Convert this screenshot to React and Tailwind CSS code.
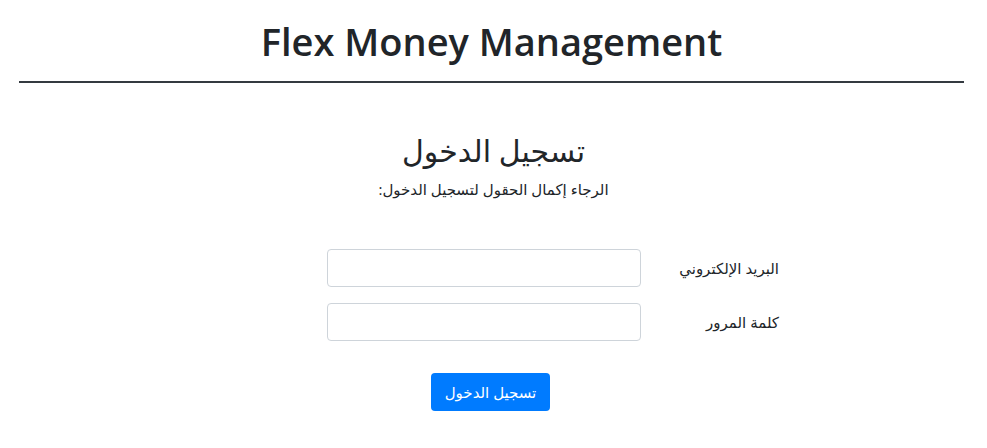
import React, { useState } from 'react';

export default function App() {
  const [form, setForm] = useState({ email: '', password: '' });

  return (
    <div className="min-h-[448px] bg-white text-[#212529]" style={{ fontFamily: '"Open Sans", "DejaVu Sans", sans-serif' }}>
      <header className="pl-[19px] pr-[23px] pt-[18px]">
        <h1 className="text-center text-[38px] leading-[46px] font-semibold pb-[17px]">Flex Money Management</h1>
        <div className="h-[2px] bg-[#343a40]" />
      </header>

      <main dir="rtl" className="pt-[48px]">
        <h2 className="text-center text-[30px] leading-[40px] font-normal">تسجيل الدخول</h2>
        <p className="text-center text-[15px] leading-[24px] mt-[6px]">الرجاء إكمال الحقول لتسجيل الدخول:</p>

        <form onSubmit={e => e.preventDefault()} className="mt-[48px]">
          <div className="w-[571px] mx-auto flex flex-col gap-[16px]">
            <div className="flex items-center">
              <label className="w-[138px] text-[15px]">البريد الإلكتروني</label>
              <input type="email" value={form.email} onChange={e => setForm({ ...form, email: e.target.value })} className="w-[314px] h-[38px] border border-[#ced4da] rounded-[4px] px-3" />
            </div>
            <div className="flex items-center">
              <label className="w-[138px] text-[15px]">كلمة المرور</label>
              <input type="password" value={form.password} onChange={e => setForm({ ...form, password: e.target.value })} className="w-[314px] h-[38px] border border-[#ced4da] rounded-[4px] px-3" />
            </div>
          </div>
          <div className="flex justify-center mt-[32px] pr-[6px]">
            <button type="submit" className="w-[119px] h-[38px] bg-[#007bff] text-white text-[15px] rounded-[4px]">تسجيل الدخول</button>
          </div>
        </form>
      </main>
    </div>
  );
}
